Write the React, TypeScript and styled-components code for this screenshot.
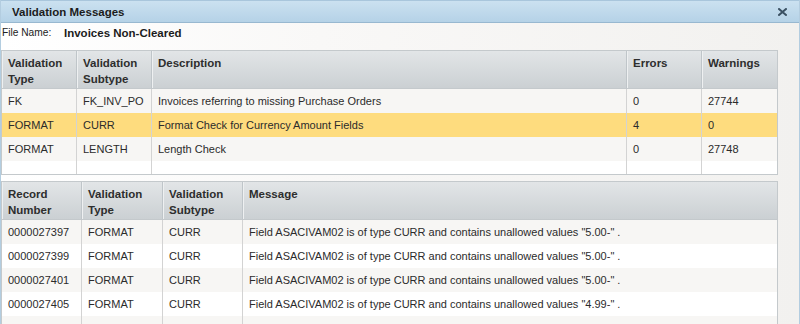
import React from "react";
import styled, { createGlobalStyle } from "styled-components";

const GlobalStyle = createGlobalStyle`
  html, body { margin: 0; padding: 0; background: #f3f2f0; }
  body { font-family: "Liberation Sans", Arial, sans-serif; color: #2b2b2b; }
  * { box-sizing: border-box; }
`;

const Dialog = styled.div`
  width: 800px;
  height: 324px;
  overflow: hidden;
  border-left: 1px solid #b3cde0;
  border-right: 1px solid #b3cde0;
  background: linear-gradient(to right, #ffffff 0%, #f9f8f7 40%, #f2f1ef 100%);
  display: flex;
  flex-direction: column;
`;

const TitleBar = styled.div`
  height: 23px;
  flex: none;
  display: flex;
  align-items: center;
  justify-content: space-between;
  padding: 0 12px 0 11px;
  background: linear-gradient(#cbe1f0, #b5d2e7);
  border-bottom: 1px solid #98b8d0;
  border-top: 1px solid #a9c6dc;
`;

const Title = styled.span`
  font-weight: bold;
  font-size: 11.5px;
  color: #1c1c1c;
`;

const CloseButton = styled.span`
  display: flex;
  width: 9px;
  height: 8px;
`;

const FileRow = styled.div`
  height: 27px;
  flex: none;
  display: flex;
  align-items: flex-start;
  padding: 4px 0 0 1px;
`;

const FileLabel = styled.span`
  font-size: 10.2px;
  color: #222;
  width: 62px;
`;

const FileValue = styled.span`
  font-size: 11.5px;
  font-weight: bold;
  color: #1c1c1c;
`;

const Grid = styled.div<{ $cols: string; $mt?: number }>`
  width: 777px;
  flex: none;
  margin-top: ${(p) => p.$mt ?? 0}px;
  display: grid;
  grid-template-columns: ${(p) => p.$cols};
  border: 1px solid #c4c9cc;
  background: #ffffff;
`;

const HeadCell = styled.div<{ $last?: boolean }>`
  height: 38px;
  padding: 4px 6px 0 6px;
  font-size: 11.5px;
  font-weight: bold;
  line-height: 16px;
  color: #2e2e2e;
  background: linear-gradient(#e2e5e7, #cbd0d3);
  border-bottom: 1px solid #c4c9cc;
  border-right: ${(p) => (p.$last ? "none" : "1px solid #bfc5c9")};
  box-shadow: inset 1px 0 0 #eef0f1;
`;

const Cell = styled.div<{ $last?: boolean; $bg: string; $h?: number }>`
  height: ${(p) => p.$h ?? 24}px;
  padding: 0 6px;
  display: flex;
  align-items: center;
  font-size: 11px;
  color: #2b2b2b;
  white-space: nowrap;
  background: ${(p) => p.$bg};
  border-right: ${(p) => (p.$last ? "none" : "1px solid #d3d3d3")};
`;

const rowBg = (i: number, selected?: boolean) =>
  selected ? "#fedc7e" : i % 2 === 0 ? "#f7f6f4" : "#ffffff";

const topCols = "75px 75px 475px 75px 1fr";
const bottomCols = "80px 81px 80px 1fr";

const topHead = [
  ["Validation", "Type"],
  ["Validation", "Subtype"],
  ["Description"],
  ["Errors"],
  ["Warnings"],
];

const topRows = [
  { cells: ["FK", "FK_INV_PO", "Invoices referring to missing Purchase Orders", "0", "27744"] },
  { cells: ["FORMAT", "CURR", "Format Check for Currency Amount Fields", "4", "0"], selected: true },
  { cells: ["FORMAT", "LENGTH", "Length Check", "0", "27748"] },
];

const bottomHead = [
  ["Record", "Number"],
  ["Validation", "Type"],
  ["Validation", "Subtype"],
  ["Message"],
];

const bottomRows = [
  ["0000027397", "FORMAT", "CURR", 'Field ASACIVAM02 is of type CURR and contains unallowed values "5.00-" .'],
  ["0000027399", "FORMAT", "CURR", 'Field ASACIVAM02 is of type CURR and contains unallowed values "5.00-" .'],
  ["0000027401", "FORMAT", "CURR", 'Field ASACIVAM02 is of type CURR and contains unallowed values "5.00-" .'],
  ["0000027405", "FORMAT", "CURR", 'Field ASACIVAM02 is of type CURR and contains unallowed values "4.99-" .'],
  ["", "", "", ""],
];

function Header({ cols }: { cols: string[][] }) {
  return (
    <>
      {cols.map((lines, i) => (
        <HeadCell key={i} $last={i === cols.length - 1}>
          {lines.map((l, j) => (
            <div key={j}>{l}</div>
          ))}
        </HeadCell>
      ))}
    </>
  );
}

export default function App() {
  return (
    <>
      <GlobalStyle />
      <Dialog>
        <TitleBar>
          <Title>Validation Messages</Title>
          <CloseButton>
            <svg width="9" height="8" viewBox="0 0 9 8">
              <path d="M1 1 L8 7 M8 1 L1 7" stroke="#3b5163" strokeWidth="2" strokeLinecap="square" />
            </svg>
          </CloseButton>
        </TitleBar>
        <FileRow>
          <FileLabel>File Name:</FileLabel>
          <FileValue>Invoices Non-Cleared</FileValue>
        </FileRow>
        <Grid $cols={topCols}>
          <Header cols={topHead} />
          {topRows.map((r, i) =>
            r.cells.map((c, j) => (
              <Cell key={`${i}-${j}`} $bg={rowBg(i, r.selected)} $last={j === r.cells.length - 1}>
                {c}
              </Cell>
            ))
          )}
          {topHead.map((_, j) => (
            <Cell key={`f-${j}`} $bg="#ffffff" $h={13} $last={j === topHead.length - 1} />
          ))}
        </Grid>
        <Grid $cols={bottomCols} $mt={6}>
          <Header cols={bottomHead} />
          {bottomRows.map((r, i) =>
            r.map((c, j) => (
              <Cell key={`${i}-${j}`} $bg={rowBg(i)} $last={j === r.length - 1}>
                {c}
              </Cell>
            ))
          )}
        </Grid>
      </Dialog>
    </>
  );
}
